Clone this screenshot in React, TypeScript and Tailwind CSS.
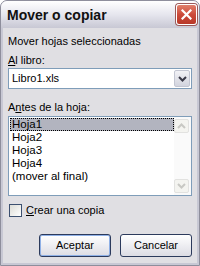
import React from "react";

const font = { fontFamily: '"Liberation Sans", Arial, sans-serif' };

function Chevron({ up, color }: { up?: boolean; color: string }) {
  return (
    <svg width="9" height="6" viewBox="0 0 9 6">
      {up ? (
        <path d="M1 5 L4.5 1.5 L8 5" stroke={color} strokeWidth="2" fill="none" />
      ) : (
        <path d="M1 1 L4.5 4.5 L8 1" stroke={color} strokeWidth="2" fill="none" />
      )}
    </svg>
  );
}

export default function App() {
  const items = ["Hoja1", "Hoja2", "Hoja3", "Hoja4", "(mover al final)"];
  return (
    <div
      className="w-[200px] h-[266px] flex flex-col rounded-t-[7px] border border-[#8e8e9c] bg-[#c8c8d4] text-[11px] text-black overflow-hidden"
      style={font}
    >
      {/* Title bar */}
      <div className="h-[27px] shrink-0 flex items-center justify-between pl-[6px] pr-[2px] bg-gradient-to-b from-[#ffffff] via-[#e6e6ee] to-[#c8c8d4]">
        <span className="text-[14px] font-bold text-[#111] leading-none pt-[1px]">Mover o copiar</span>
        <div className="w-[21px] h-[21px] rounded-[3px] border border-white bg-gradient-to-b from-[#e0806c] via-[#cc4a3a] to-[#b83828] flex items-center justify-center shadow-[0_0_0_1px_#9a5a5a]">
          <svg width="11" height="11" viewBox="0 0 11 11">
            <path d="M1.5 1.5 L9.5 9.5 M9.5 1.5 L1.5 9.5" stroke="white" strokeWidth="2.2" strokeLinecap="square" />
          </svg>
        </div>
      </div>

      {/* Body */}
      <div className="flex-1 ml-[2px] mr-[2px] mb-[2px] bg-[#e0dfe3] pl-[5px] pr-[5px] pt-[7px] flex flex-col">
        <div className="h-[13px] leading-[13px]">Mover hojas seleccionadas</div>
        <div className="h-[13px] leading-[13px] mt-[6px]">
          <span className="underline underline-offset-[1px]">A</span>l libro:
        </div>
        <div className="mt-[1px] h-[21px] border border-[#7f9db9] bg-white flex items-center">
          <span className="flex-1 pl-[3px] leading-[13px]">Libro1.xls</span>
          <div className="w-[16px] h-[17px] mr-[1px] rounded-[2px] border border-[#c3c6d2] bg-gradient-to-b from-[#f2f2f6] to-[#d2d4de] flex items-center justify-center">
            <Chevron color="#3a3a48" />
          </div>
        </div>

        <div className="h-[13px] leading-[13px] mt-[12px]">
          A<span className="underline underline-offset-[1px]">n</span>tes de la hoja:
        </div>
        <div className="mt-[2px] h-[80px] border border-[#7f9db9] bg-white flex">
          <div className="flex-1 pt-[1px] pl-[1px] text-[11.5px]">
            {items.map((it, i) => (
              <div
                key={it}
                className={
                  "h-[13px] leading-[13px] pl-[2px] " +
                  (i === 0 ? "bg-[#b2b4bf] outline outline-1 outline-dotted outline-black -outline-offset-1" : "")
                }
              >
                {it}
              </div>
            ))}
          </div>
          <div className="w-[17px] bg-[#fafafa] flex flex-col justify-between py-[2px] pr-[1px]">
            <div className="h-[14px] w-[15px] rounded-[2px] border border-[#e2e2e0] bg-[#f4f4f0] flex items-center justify-center">
              <Chevron up color="#c8c8c4" />
            </div>
            <div className="h-[14px] w-[15px] rounded-[2px] border border-[#e2e2e0] bg-[#f4f4f0] flex items-center justify-center">
              <Chevron color="#c8c8c4" />
            </div>
          </div>
        </div>

        <div className="mt-[8px] flex items-center h-[13px] pl-[1px]">
          <div className="w-[13px] h-[13px] border border-[#3c5070] bg-gradient-to-br from-[#dcdcd6] to-[#ffffff]" />
          <span className="ml-[4px] leading-[13px]">
            <span className="underline underline-offset-[1px]">C</span>rear una copia
          </span>
        </div>

        <div className="mt-[17px] flex justify-end gap-[9px]">
          <div className="w-[72px] h-[23px] rounded-[3px] border border-[#2c3a5c] bg-gradient-to-b from-[#ffffff] to-[#dcdce4] flex items-center justify-center shadow-[inset_0_0_0_1px_#8fb0e6]">
            Aceptar
          </div>
          <div className="w-[72px] h-[23px] rounded-[3px] border border-[#2c3a5c] bg-gradient-to-b from-[#ffffff] to-[#dcdce4] flex items-center justify-center">
            Cancelar
          </div>
        </div>
      </div>
    </div>
  );
}
